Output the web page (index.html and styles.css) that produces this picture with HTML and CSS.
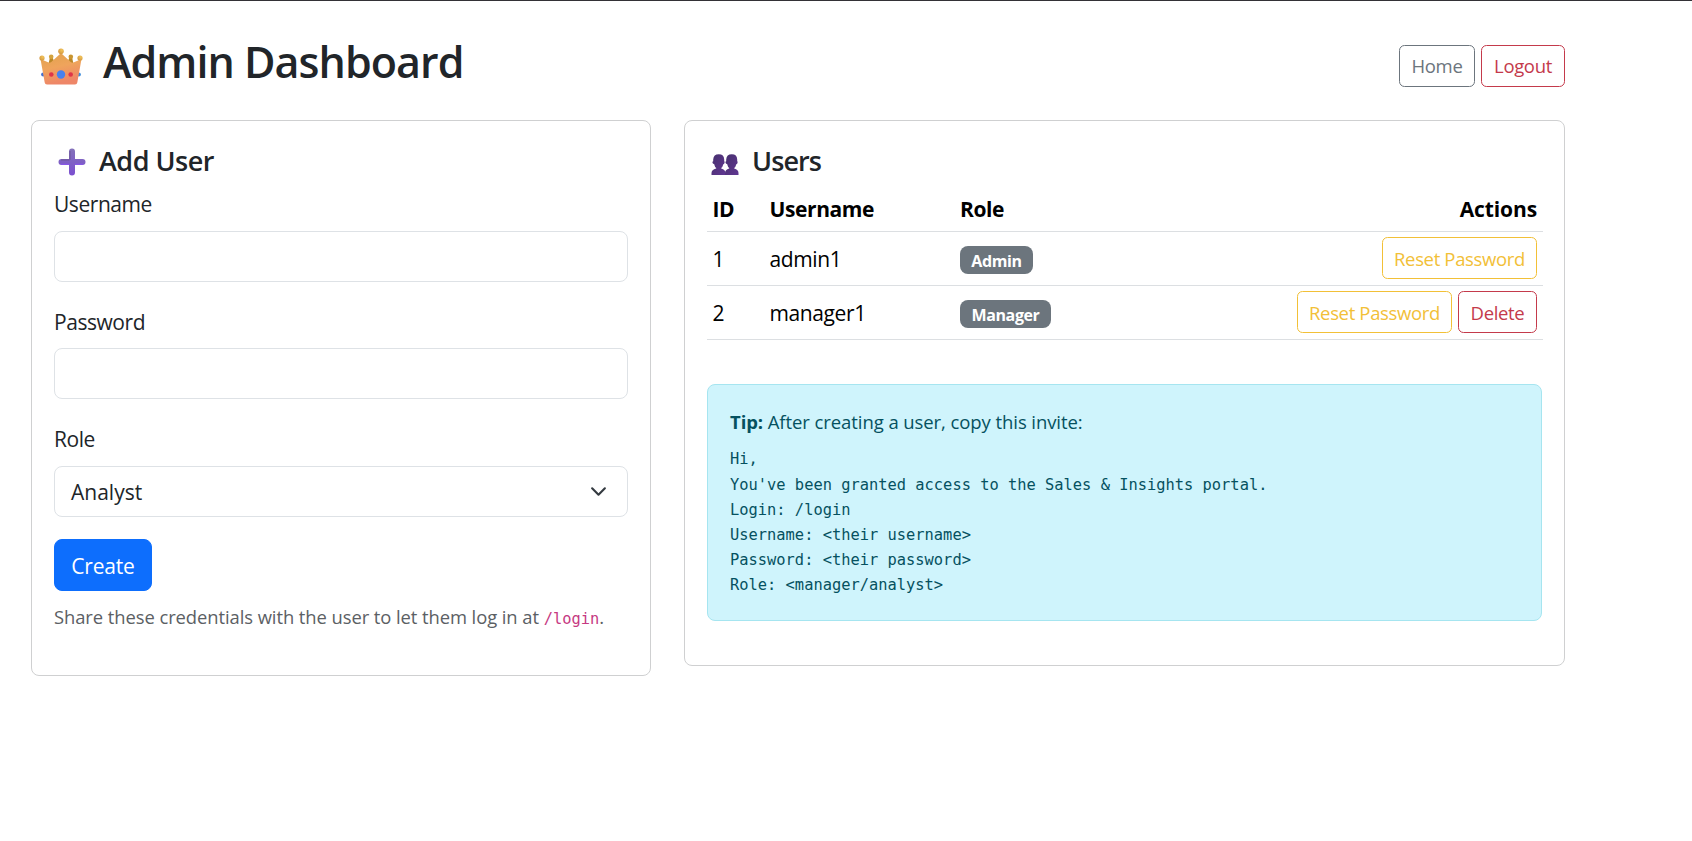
FILE: index.html
```html
<!DOCTYPE html>
<html lang="en">
<head>
<meta charset="utf-8">
<title>Admin Dashboard</title>
<link rel="stylesheet" href="styles.css">
</head>
<body>
<main class="container">
  <header class="page-header">
    <h1 class="page-title">
      <svg class="crown" viewBox="0 0 44 38" aria-hidden="true">
        <defs>
          <linearGradient id="gold" x1="0" y1="0" x2="0.3" y2="1"><stop offset="0" stop-color="#e0a24c"/><stop offset="0.5" stop-color="#efa45c"/><stop offset="1" stop-color="#ee8668"/></linearGradient>
          <radialGradient id="knob" cx="0.65" cy="0.3" r="0.8"><stop offset="0" stop-color="#f2c458"/><stop offset="1" stop-color="#cf9340"/></radialGradient>
        </defs>
        <path d="M9.500 16 11 9H13.500L16 16ZM28 16 30.500 9H33L34.500 16Z" fill="#ba8728"/>
        <circle cx="12.200" cy="8.800" r="2.300" fill="#d3a33e"/><circle cx="31.800" cy="8.800" r="2.300" fill="#c99530"/>
        <circle cx="4.200" cy="26.500" r="2.100" fill="#426fd0"/><circle cx="39.800" cy="26.500" r="2.100" fill="#3e8ddb"/>
        <path d="M1.500 11 9 14.300Q10.500 15 12 14.200L21 6Q22 5.200 23 6L32 14.200Q33.500 15 35 14.300L42.500 11L38.300 34.500Q38 36.500 36 36.500H8Q6 36.500 5.700 34.500Z" fill="url(#gold)"/>
        <circle cx="22" cy="3.300" r="2.800" fill="url(#knob)"/><circle cx="3" cy="10" r="2.600" fill="url(#knob)"/><circle cx="41" cy="10" r="2.600" fill="url(#knob)"/>
        <circle cx="12.300" cy="26.500" r="2.300" fill="#df3549"/><circle cx="31.700" cy="26.500" r="2.300" fill="#df3549"/>
        <circle cx="22" cy="26.500" r="4.200" fill="#4781ee"/>
      </svg>
      <span>Admin Dashboard</span>
    </h1>
    <nav class="actions">
      <a class="btn btn-sm btn-secondary w-home">Home</a>
      <a class="btn btn-sm btn-danger w-logout">Logout</a>
    </nav>
  </header>

  <div class="columns">
    <section class="card">
      <h2 class="card-title">
        <svg class="plus" viewBox="0 0 28 28" aria-hidden="true">
          <defs><linearGradient id="violet" x1="0" y1="0" x2="0" y2="1"><stop offset="0" stop-color="#8371b9"/><stop offset="1" stop-color="#7b4fd0"/></linearGradient></defs>
          <path d="M14 .5a3 3 0 0 1 3 3V11h7.500a3 3 0 0 1 0 6H17v7.500a3 3 0 0 1-6 0V17H3.500a3 3 0 0 1 0-6H11V3.500a3 3 0 0 1 3-3Z" fill="url(#violet)"/>
          <path d="M12 3v8.500L11.500 12H3" fill="none" stroke="#6c5797" stroke-width="1"/>
          <path d="M3 16.300h8.500M17 16.300h8" stroke="#8857e6" stroke-width="1.200"/>
        </svg>
        <span>Add User</span>
      </h2>
      <form class="form">
        <div class="field"><label class="label" for="u">Username</label><input class="control" id="u" type="text"></div>
        <div class="field"><label class="label" for="p">Password</label><input class="control" id="p" type="password"></div>
        <div class="field field-last"><span class="label">Role</span>
          <div class="control select"><span class="value">Analyst</span>
            <svg class="chevron" viewBox="0 0 16 16" aria-hidden="true"><path d="m2 5 6 6 6-6" fill="none" stroke="#343a40" stroke-width="2" stroke-linecap="round" stroke-linejoin="round"/></svg>
          </div>
        </div>
        <button class="btn btn-primary" type="button">Create</button>
      </form>
      <p class="help">Share these credentials with the user to let them log in at <code>/login</code>.</p>
    </section>

    <section class="card">
      <h2 class="card-title users-title">
        <svg class="people" viewBox="0 0 28 21" aria-hidden="true">
          <defs><linearGradient id="plum" x1="0" y1="0" x2="1" y2="1"><stop offset="0" stop-color="#45306d"/><stop offset="0.600" stop-color="#573483"/><stop offset="1" stop-color="#5f3792"/></linearGradient></defs>
          <path fill="url(#plum)" d="M2.200 5.500Q2.500.300 7.800.300T13.200 5.500V7.200Q14 7.500 13.500 9T12.400 10Q11.500 13.300 10.200 14V14.500Q14.500 15.500 14.500 19V21H.500V19Q.500 15.500 5.200 14.500V14Q3.800 13 3.100 10 1.900 10 1.500 8.800T2.200 7.200Z"/>
          <path fill="url(#plum)" d="M15.200 5.500Q15.500.300 20.800.300T26.200 5.500V7.200Q27 7.500 26.500 9T25.400 10Q24.500 13.300 23.200 14V14.500Q27.500 15.500 27.500 19V21H14V19Q14 15.500 18.200 14.500V14Q16.800 13 16.100 10 14.900 10 14.500 8.800T15.200 7.200Z"/>
        </svg>
        <span>Users</span>
      </h2>
      <table class="table">
        <thead><tr><th class="c-id">ID</th><th class="c-name">Username</th><th class="c-role">Role</th><th class="c-act">Actions</th></tr></thead>
        <tbody>
          <tr><td class="cell-text">1</td><td class="cell-text">admin1</td><td><span class="badge badge-admin">Admin</span></td>
            <td><div class="actions"><a class="btn btn-sm btn-warning">Reset Password</a></div></td></tr>
          <tr><td class="cell-text">2</td><td class="cell-text">manager1</td><td><span class="badge badge-manager">Manager</span></td>
            <td><div class="actions"><a class="btn btn-sm btn-warning">Reset Password</a><a class="btn btn-sm btn-danger w-delete">Delete</a></div></td></tr>
        </tbody>
      </table>
      <div class="alert">
        <div class="tip"><strong>Tip:</strong> After creating a user, copy this invite:</div>
        <pre class="invite">Hi,
You've been granted access to the Sales &amp; Insights portal.
Login: /login
Username: &lt;their username&gt;
Password: &lt;their password&gt;
Role: &lt;manager/analyst&gt;</pre>
      </div>
    </section>
  </div>
</main>
</body>
</html>
```
FILE: styles.css
```css
* { box-sizing: border-box; }
body {
  margin: 0;
  border-top: 1px solid #333136;
  background: #fff;
  color: #212529;
  font-family: "Open Sans", "Noto Sans", sans-serif;
  font-size: 21px;
  font-weight: 370;
  line-height: 33px;
  letter-spacing: -0.4px;
}
.container { width: 1565px; padding: 32px 0 0 31px; }
.page-header { display: flex; justify-content: space-between; align-items: center; height: 65px; margin-bottom: 22px; }
.page-title { display: flex; align-self: flex-start; gap: 20px; margin: 2px 0 0; padding-left: 8px; font-size: 43px; line-height: 53px; font-weight: 600; letter-spacing: -0.95px; }
.crown { width: 44px; height: 38px; margin-top: 13px; }
.actions { display: flex; justify-content: flex-end; gap: 6px; }
.columns { display: grid; grid-template-columns: 620px 881px; gap: 33px; align-items: start; }
.card { border: 1px solid #cfd0d1; border-radius: 8px; padding: 22px; }
.card-title { display: flex; gap: 13px; margin: 0 0 10px; padding: 1px 0 0 4px; font-size: 27px; line-height: 33px; font-weight: 600; letter-spacing: -0.5px; }
.users-title { letter-spacing: -0.9px; }
.plus { width: 28px; height: 28px; margin-top: 3.5px; }
.people { width: 28px; height: 21px; margin-top: 10px; }
.field { margin-bottom: 23px; }
.field-last { margin-bottom: 22px; }
.label { display: block; padding-top: 1px; margin-bottom: 9.5px; letter-spacing: -0.45px; }
.control { display: block; width: 574px; height: 51px; padding: 8px 16px; border: 1px solid #dee2e6; border-radius: 8px; background: #fff; font: inherit; color: inherit; }
.select { display: flex; justify-content: space-between; align-items: center; padding-right: 20px; }
.value { padding-top: 2px; letter-spacing: 0; }
.chevron { width: 17px; height: 17px; }
.btn { display: flex; align-items: center; justify-content: center; border: 1px solid; border-radius: 8px; font-family: inherit; font-weight: inherit; }
.btn-primary { width: 98px; height: 52px; padding: 3px 0 0; border-color: #0d6efd; background: #0d6efd; color: #fff; font-size: 21px; letter-spacing: -0.2px; }
.btn-sm { height: 42px; border-radius: 5.500px; font-size: 18.5px; letter-spacing: -0.35px; }
.btn-secondary { color: #6c757d; }
.btn-danger { color: #c43a4b; }
.btn-warning { width: 155px; color: #f2c037; }
.w-home { width: 76px; }
.w-logout { width: 84px; }
.w-delete { width: 79px; }
.help { margin: 11px 0 22px; font-size: 18.400px; line-height: 29px; letter-spacing: -0.07px; color: #5b6064; white-space: nowrap; }
.help code { font-family: "DejaVu Sans Mono", monospace; font-size: 15.400px; line-height: 1; color: #c63982; letter-spacing: 0; }
.table { width: 836px; margin: 0 0 44px; table-layout: fixed; border-collapse: collapse; color: #000; }
.table th, .table td { padding: 5px 6px 5px 5.500px; border-bottom: 1px solid #dcdfe2; text-align: left; vertical-align: middle; }
.table th { height: 44.500px; font-weight: 700; }
.table td { height: 54px; }
.table .cell-text { padding-top: 7px; }
.table .c-id { width: 57px; }
.table .c-name { width: 190.5px; }
.table .c-role { width: 204px; }
.table .c-act { text-align: right; letter-spacing: -0.1px; }
.badge { display: flex; align-items: center; justify-content: center; height: 28px; padding-top: 2px; margin-top: 2px; border-radius: 8px; background: #6c757d; color: #fff; font-size: 16px; line-height: 16px; font-weight: 700; }
.table .actions { margin-top: -1px; }
.badge-admin { width: 73px; }
.badge-manager { width: 91px; }
.alert { margin-bottom: 22px; padding: 22px; border: 1px solid #a6e5f0; border-radius: 8px; background: #cff4fc; color: #055160; }
.tip { font-size: 18.500px; line-height: 29px; letter-spacing: -0.08px; }
.invite { margin: 11.4px 0 -0.4px; font-family: "DejaVu Sans Mono", monospace; font-size: 15.400px; line-height: 25.200px; letter-spacing: 0; }
```
